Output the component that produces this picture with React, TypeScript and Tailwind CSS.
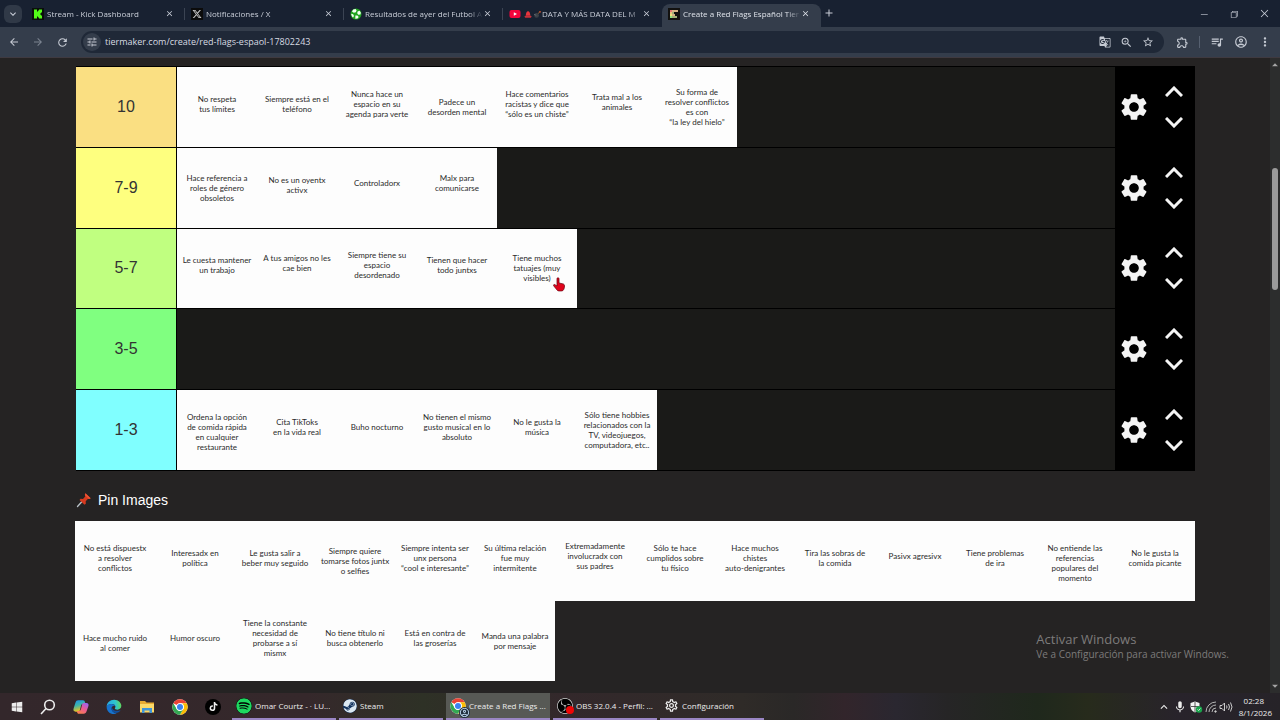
import React, { useState } from 'react';
import {
  MdAdd,
  MdArrowBack,
  MdArrowDropDown,
  MdArrowDropUp,
  MdArrowForward,
  MdClose,
  MdGTranslate,
  MdKeyboardArrowDown,
  MdKeyboardArrowUp,
  MdMic,
  MdMoreVert,
  MdOutlineAccountCircle,
  MdOutlineExtension,
  MdOutlineSettings,
  MdQueueMusic,
  MdRefresh,
  MdSettings,
  MdStarBorder,
  MdTune,
  MdZoomIn,
} from 'react-icons/md';
import { VscChromeClose, VscChromeMinimize, VscChromeRestore } from 'react-icons/vsc';
import { FaSpotify, FaSteam, FaTiktok, FaWindows, FaXTwitter } from 'react-icons/fa6';
import { SiObsstudio } from 'react-icons/si';

// Where the caption sits inside its 80px square
type Level = 'high' | 'upper' | 'middle' | 'low';

interface Card {
  text: string;
  level?: Level;
}

interface Tier {
  label: string;
  color: string;
  cards: Card[];
}

const LEVEL_CLASS: Record<Level, string> = {
  high: 'pb-[10px]',
  upper: 'pb-[6px]',
  middle: 'pb-0',
  low: 'pt-1',
};

const TIERS: Tier[] = [
  {
    label: '10',
    color: 'bg-[#fadf82]',
    cards: [
      { text: 'No respeta\ntus límites' },
      { text: 'Siempre está en el\nteléfono' },
      { text: 'Nunca hace un\nespacio en su\nagenda para verte' },
      { text: 'Padece un\ndesorden mental', level: 'middle' },
      { text: 'Hace comentarios\nracistas y dice que\n“sólo es un chiste”' },
      { text: 'Trata mal a los\nanimales', level: 'high' },
      { text: 'Su forma de\nresolver conflictos\nes con\n“la ley del hielo”', level: 'middle' },
    ],
  },
  {
    label: '7-9',
    color: 'bg-[#feff7f]',
    cards: [
      { text: 'Hace referencia a\nroles de género\nobsoletos', level: 'middle' },
      { text: 'No es un oyentx\nactivx' },
      { text: 'Controladorx', level: 'high' },
      { text: 'Malx para\ncomunicarse', level: 'high' },
    ],
  },
  {
    label: '5-7',
    color: 'bg-[#c0ff80]',
    cards: [
      { text: 'Le cuesta mantener\nun trabajo' },
      { text: 'A tus amigos no les\ncae bien', level: 'high' },
      { text: 'Siempre tiene su\nespacio\ndesordenado' },
      { text: 'Tienen que hacer\ntodo juntxs' },
      { text: 'Tiene muchos\ntatuajes (muy\nvisibles)', level: 'middle' },
    ],
  },
  { label: '3-5', color: 'bg-[#80ff80]', cards: [] },
  {
    label: '1-3',
    color: 'bg-[#80ffff]',
    cards: [
      { text: 'Ordena la opción\nde comida rápida\nen cualquier\nrestaurante', level: 'low' },
      { text: 'Cita TikToks\nen la vida real' },
      { text: 'Buho nocturno' },
      { text: 'No tienen el mismo\ngusto musical en lo\nabsoluto' },
      { text: 'No le gusta la\nmúsica' },
      { text: 'Sólo tiene hobbies\nrelacionados con la\nTV, videojuegos,\ncomputadora, etc..', level: 'middle' },
    ],
  },
];

const PINS: Card[] = [
  { text: 'No está dispuestx\na resolver\nconflictos' },
  { text: 'Interesadx en\npolítica' },
  { text: 'Le gusta salir a\nbeber muy seguido' },
  { text: 'Siempre quiere\ntomarse fotos juntx\no selfies', level: 'middle' },
  { text: 'Siempre intenta ser\nunx persona\n“cool e interesante”' },
  { text: 'Su última relación\nfue muy\nintermitente' },
  { text: 'Extremadamente\ninvolucradx con\nsus padres', level: 'high' },
  { text: 'Sólo te hace\ncumplidos sobre\ntu físico' },
  { text: 'Hace muchos\nchistes\nauto-denigrantes' },
  { text: 'Tira las sobras de\nla comida' },
  { text: 'Pasivx agresivx', level: 'high' },
  { text: 'Tiene problemas\nde ira' },
  { text: 'No entiende las\nreferencias\npopulares del\nmomento', level: 'low' },
  { text: 'No le gusta la\ncomida picante' },
  { text: 'Hace mucho ruido\nal comer', level: 'low' },
  { text: 'Humor oscuro' },
  { text: 'Tiene la constante\nnecesidad de\nprobarse a sí\nmismx' },
  { text: 'No tiene título ni\nbusca obtenerlo' },
  { text: 'Está en contra de\nlas groserías' },
  { text: 'Manda una palabra\npor mensaje', level: 'middle' },
];

/* ---------- logos ---------- */

function KickLogo() {
  return (
    <svg viewBox="0 0 12 12" className="size-3 shrink-0">
      <rect width="12" height="12" fill="#0a0f0a" />
      <path d="M2 1.5h3v2h1v-1h1v-1h3v3H9v1H8v1h1v1h1v3H7v-1H6v-1H5v2H2z" fill="#53fc18" />
    </svg>
  );
}

function XLogo() {
  return (
    <span className="flex size-3 shrink-0 items-center justify-center bg-[#0b0b0b] text-[#c9c9c9]">
      <FaXTwitter size={10} />
    </span>
  );
}

function FootballLogo() {
  return (
    <svg viewBox="0 0 12 12" className="size-3 shrink-0">
      <circle cx="6" cy="6" r="5.5" fill="#1ea51e" />
      <path d="M3.2 1.6 5.6 1l1 1.4-.8 1.8-2 .5L2 3.5zM7.6 3.6l2-.8 1.3 2-.5 1.6-2 .3-1.2-1.5zM1.2 5.8l2 .4.8 1.9-1 1.4C1.9 8.6 1.2 7.3 1.2 5.8zM5.4 7.6l2-.2 1.3 1.5-1.2 1.7-2.2.2z" fill="#f2fff2" />
    </svg>
  );
}

function YoutubeLogo() {
  return (
    <svg viewBox="0 0 12 12" className="size-3 shrink-0">
      <rect x="0.5" y="2" width="11" height="8" rx="2" fill="#f5053c" />
      <path d="M4.8 4.2v3.6L8 6z" fill="#fff" />
    </svg>
  );
}

function TierMakerLogo() {
  return (
    <svg viewBox="0 0 12 12" className="size-3 shrink-0">
      <rect width="12" height="12" fill="#12110f" />
      <path d="M2 2h2v2H2z" fill="#e87a74" />
      <path d="M2 4h2v2H2z" fill="#ecc27e" />
      <path d="M2 6h2v2H2z" fill="#efe57e" />
      <path d="M2 8h2v2H2z" fill="#8fe07e" />
      <path d="M4 2h6v2H4zM4 6h3v2H4z" fill="#d6b384" />
      <path d="M4 4h2v2H4zM4 8h5v2H4z" fill="#a3b377" />
    </svg>
  );
}

function SirenBomb() {
  return (
    <svg viewBox="0 0 20 10" className="inline-block h-[9px] w-[18px] align-[-2px]">
      <path d="M2 6.5C2 3.5 3 1.5 4.5 1.5S7 3.5 7 6.5z" fill="#e8353d" />
      <rect x="1" y="6.5" width="7" height="2" rx="0.5" fill="#c9303a" />
      <circle cx="14" cy="6" r="2.6" fill="#3c4148" />
      <path d="m15.5 4 2-1.8" stroke="#a7682f" strokeWidth="0.9" />
      <circle cx="17.8" cy="2" r="1" fill="#d8552c" />
      <path d="M11.5 4.5 13 6" stroke="#9fa5ad" strokeWidth="0.7" />
    </svg>
  );
}

function ChromeLogo() {
  return (
    <svg viewBox="0 0 48 48" className="size-4 shrink-0">
      <circle cx="24" cy="24" r="23" fill="#fff" />
      <path d="M24 1a23 23 0 0 1 19.9 11.5H24A11.5 11.5 0 0 0 14 18.2L4.1 12.5A23 23 0 0 1 24 1z" fill="#ea4335" />
      <path d="M43.9 12.5A23 23 0 0 1 24 47l10-17.3a11.5 11.5 0 0 0 0-11.5l-3-5.7z" fill="#fbbc05" />
      <path d="M24 47A23 23 0 0 1 4.1 12.5L14 29.7a11.5 11.5 0 0 0 15.7 4.3l4.3-4.3z" fill="#34a853" />
      <circle cx="24" cy="24" r="11.5" fill="#fff" />
      <circle cx="24" cy="24" r="9" fill="#3b82f0" />
    </svg>
  );
}

function ChromeProfileLogo() {
  return (
    <span className="relative flex shrink-0">
      <ChromeLogo />
      <span className="absolute -right-1 -bottom-1 flex rounded-full bg-[#202e3d] text-[#b9d3ea]">
        <MdOutlineAccountCircle size={11} />
      </span>
    </span>
  );
}

function CopilotLogo() {
  return (
    <svg viewBox="0 0 24 24" className="size-4 shrink-0">
      <defs>
        <linearGradient id="cp1" x1="0" y1="0" x2="0.3" y2="1">
          <stop offset="0" stopColor="#1c8fee" />
          <stop offset="0.5" stopColor="#3fb6a8" />
          <stop offset="1" stopColor="#f2c21b" />
        </linearGradient>
        <linearGradient id="cp2" x1="0.8" y1="0" x2="0.2" y2="1">
          <stop offset="0" stopColor="#9a63f0" />
          <stop offset="0.5" stopColor="#ec5b93" />
          <stop offset="1" stopColor="#f7824a" />
        </linearGradient>
      </defs>
      <path d="M8 2h7c2 0 2.5 1 3 3l.5 2h-3c-2 0-3 1-3.5 3l-1.5 6c-.5 2-1.5 3-3.5 3H4c-3 0-4-2-3-5L3.5 6C4.5 3 5.5 2 8 2z" fill="url(#cp1)" />
      <path d="M16 22H9c-2 0-2.5-1-3-3l-.3-1h2.8c2 0 3-1 3.5-3l1.5-6c.5-2 1.5-3 3.5-3h3c3 0 4 2 3 5l-2.5 7c-1 3-2 4-4.5 4z" fill="url(#cp2)" />
    </svg>
  );
}

function EdgeLogo() {
  return (
    <svg viewBox="0 0 24 24" className="size-4 shrink-0">
      <defs>
        <linearGradient id="ed1" x1="0" y1="0.5" x2="1" y2="0.4">
          <stop offset="0" stopColor="#25a7e6" />
          <stop offset="0.6" stopColor="#2fc4cf" />
          <stop offset="1" stopColor="#62d957" />
        </linearGradient>
      </defs>
      <path d="M1 12C1 5.5 6 1 12.2 1 19 1 23 5.8 23 10.3c0 3.7-2.8 5.7-5.8 5.7-2.5 0-3.9-.8-3.9-1.8 0-.7.9-1 .9-2.5C14.2 9.5 12 7.5 9 7.5c-4 0-7 2-8 4.5z" fill="url(#ed1)" />
      <path d="M1 12c.6-2.7 3.5-4.5 7-4.5 2.8 0 4.8 1.2 5.6 2.7-3.5-.8-5.9 2-5.2 5.3.8 3.7 4 6.2 8.1 5.6-1.4 1-3 1.5-4.7 1.5C5.6 22.6 1 18 1 12z" fill="#1673cf" />
      <path d="M9 12.2c-.8 1-.9 2.2-.6 3.5.8 3.6 4.4 5.7 8.2 5.1 2.2-.5 3.9-1.7 5-3.4.3-.4-.1-.8-.5-.6-5.2 2.2-11.5.6-12.1-4.6z" fill="#11509f" />
    </svg>
  );
}

function ExplorerLogo() {
  return (
    <svg viewBox="0 0 16 14" className="h-[14px] w-4 shrink-0">
      <path d="M1 1h5l1.5 1.5H15V12H1z" fill="#e7ab32" />
      <path d="M1 4h14v8.5H1z" fill="#fbd969" />
      <path d="M3 8h10v5h-2.5v-2.5h-5V13H3z" fill="#3f96d8" />
    </svg>
  );
}

function PushPin() {
  return (
    <svg viewBox="0 0 16 16" className="size-4">
      <path d="M1.5 14.5 6.5 9" stroke="#b9c2c8" strokeWidth="1.3" strokeLinecap="round" />
      <path d="m9.4 1.3 5.3 4.9-1.6.9-1.3-.2-2.1 2.3.1 2.6-1.3.9-5-4.7 1-1.2 2.5.2 2.2-2.4-.4-1.9z" fill="#d63a1f" />
      <path d="m9.4 1.3 5.3 4.9-1.6.9-4.1-3.9z" fill="#ee5434" />
    </svg>
  );
}

function HandCursor() {
  return (
    <svg viewBox="0 0 24 28" className="h-[15px] w-3">
      <path d="M8 2.5c0-1.300.9-2 2-2s2 .7 2 2V11l8 1.8c2 .5 3 1.7 3 3.7 0 4-.8 7.5-3.5 9.8-1 .9-9 .9-10 0C7 24.500 4.500 20.500 1.300 16.500c-1-1.500.7-3.200 2.500-2.200L8 17z" fill="#e0041c" stroke="#6c0612" strokeWidth="1.5" />
    </svg>
  );
}

function Chevron({ up = false }: { up?: boolean }) {
  return (
    <svg viewBox="0 0 18 11" className="h-[11px] w-[18px]" fill="none" stroke="currentColor" strokeWidth="3">
      <path d={up ? 'M1 10 9 2l8 8' : 'm1 1 8 8 8-8'} />
    </svg>
  );
}

/* ---------- browser chrome ---------- */

const TABS = [
  { title: 'Stream - Kick Dashboard', icon: <KickLogo /> },
  { title: 'Notificaciones / X', icon: <XLogo /> },
  { title: 'Resultados de ayer del Futbol A', icon: <FootballLogo /> },
  { title: 'DATA Y MÁS DATA DEL M', icon: <YoutubeLogo />, prefix: <SirenBomb /> },
  { title: 'Create a Red Flags Español Tier', icon: <TierMakerLogo /> },
];

function TabStrip() {
  const [active, setActive] = useState(4);

  return (
    <div className="flex h-[27px] items-end bg-[#182131] text-[#c9ced8]">
      <button aria-label="Buscar pestañas" className="mx-1 mb-1 flex size-[18px] shrink-0 items-center justify-center rounded-md bg-[#303947]">
        <MdKeyboardArrowDown size={12} />
      </button>
      {TABS.map((tab, i) => (
        <div
          key={tab.title}
          className={`flex h-[23px] min-w-0 flex-[0_1_159px] items-center rounded-t-lg pb-1 pl-[6px] ${
            i === active ? 'bg-[#343d4b] text-[#dfe3ea]' : ''
          }`}
        >
          <button onClick={() => setActive(i)} className="flex min-w-0 flex-1 items-center gap-[3px] text-left">
            {tab.icon}
            <span className="min-w-0 flex-1 overflow-hidden text-[8px] leading-4 whitespace-nowrap [mask-image:linear-gradient(to_right,black_88%,transparent)]">
              {tab.prefix}
              {tab.title}
            </span>
          </button>
          <button aria-label={`Cerrar ${tab.title}`} className="shrink-0">
            <MdClose size={9} />
          </button>
          <span className={`ml-[10px] h-3 w-px ${i < active - 1 ? 'bg-[#3b4453]' : ''}`} />
        </div>
      ))}
      <button aria-label="Nueva pestaña" className="mb-2 ml-[2px] shrink-0">
        <MdAdd size={12} />
      </button>
      <div className="mb-2 ml-auto flex shrink-0 gap-5 pr-[10px]">
        <button aria-label="Minimizar"><VscChromeMinimize size={10} /></button>
        <button aria-label="Restaurar"><VscChromeRestore size={10} /></button>
        <button aria-label="Cerrar"><VscChromeClose size={11} /></button>
      </div>
    </div>
  );
}

function Toolbar() {
  return (
    <div className="flex h-[31px] items-center border-b border-[#3f3a40] bg-[#343d4b] text-[#c5cad3]">
      <div className="flex w-[81px] shrink-0 items-center gap-3 pl-2">
        <button aria-label="Atrás"><MdArrowBack size={12} /></button>
        <button aria-label="Adelante" className="text-[#7b8390]"><MdArrowForward size={12} /></button>
        <button aria-label="Recargar"><MdRefresh size={13} /></button>
      </div>
      <div className="flex h-[22px] min-w-0 flex-1 items-center rounded-full bg-[#1f2837] pr-[10px] pl-[2px]">
        <button aria-label="Información del sitio" className="flex size-[18px] shrink-0 items-center justify-center rounded-full bg-[#343d4b]">
          <MdTune size={12} />
        </button>
        <input
          aria-label="Dirección"
          defaultValue="tiermaker.com/create/red-flags-espaol-17802243"
          className="ml-1 min-w-0 flex-1 bg-transparent text-[9px] text-[#d7dbe2] outline-none"
        />
        <div className="flex items-center gap-[9px]">
          <button aria-label="Traducir"><MdGTranslate size={12} /></button>
          <button aria-label="Zoom"><MdZoomIn size={13} /></button>
          <button aria-label="Favorito"><MdStarBorder size={12} /></button>
        </div>
      </div>
      <div className="flex shrink-0 items-center gap-[10px] pr-2 pl-3">
        <button aria-label="Extensiones"><MdOutlineExtension size={13} /></button>
        <span className="h-3 w-px bg-[#566070]" />
        <button aria-label="Multimedia"><MdQueueMusic size={14} /></button>
        <button aria-label="Perfil"><MdOutlineAccountCircle size={14} /></button>
        <button aria-label="Menú"><MdMoreVert size={14} /></button>
      </div>
    </div>
  );
}

/* ---------- tier list ---------- */

function CardTile({ card }: { card: Card }) {
  return (
    <div
      className={`flex min-h-[79px] w-20 shrink-0 items-center justify-center bg-[#fdfdfd] text-center font-['Lato',sans-serif] text-[8px] leading-[10px] whitespace-pre text-[#2b2b2b] ${
        LEVEL_CLASS[card.level ?? 'upper']
      }`}
    >
      {card.text}
    </div>
  );
}

function TierRow({ tier, showCursor }: { tier: Tier; showCursor: boolean }) {
  return (
    <div className="flex gap-px">
      <div className={`flex w-[100px] shrink-0 items-center justify-center text-base leading-5 text-[#333] ${tier.color}`}>{tier.label}</div>
      <div className="relative flex min-w-0 flex-1 flex-wrap bg-[#1a1a18]">
        {tier.cards.map(card => (
          <CardTile key={card.text} card={card} />
        ))}
        {showCursor && (
          <span className="absolute top-12 left-[376px]">
            <HandCursor />
          </span>
        )}
      </div>
      <div className="-ml-px flex w-20 shrink-0 items-center gap-[15px] pl-[3px] text-[#f4f4f4]">
        <button aria-label={`Opciones de ${tier.label}`}><MdSettings size={32} /></button>
        <div className="flex flex-col gap-5">
          <button aria-label={`Subir ${tier.label}`}><Chevron up /></button>
          <button aria-label={`Bajar ${tier.label}`}><Chevron /></button>
        </div>
      </div>
    </div>
  );
}

function Page() {
  return (
    <div className="flex min-h-0 flex-1 bg-[#252323]">
      <main className="relative min-w-0 flex-1 overflow-hidden px-[75px] pt-2">
        <div className="ml-px grid min-h-[405px] auto-rows-fr gap-px border-y border-black bg-black">
          {TIERS.map(tier => (
            <TierRow key={tier.label} tier={tier} showCursor={tier.label === '5-7'} />
          ))}
        </div>
        <h2 className="ml-px flex h-[50px] items-center gap-[6px] pt-2 text-sm text-white">
          <PushPin />
          Pin Images
        </h2>
        <div className="grid auto-rows-[80px] grid-cols-[repeat(auto-fill,80px)]">
          {PINS.map(card => (
            <CardTile key={card.text} card={card} />
          ))}
        </div>
        <div className="absolute right-[41px] bottom-8 font-['Open_Sans',sans-serif] text-[#7d7b7b]">
          <p className="text-[13px] leading-4">Activar Windows</p>
          <p className="text-[10px] leading-[14px]">Ve a Configuración para activar Windows.</p>
        </div>
      </main>
      <div className="flex w-[10px] shrink-0 flex-col items-center bg-[#2c2d2d] text-[#a5a5a5]">
        <MdArrowDropUp size={14} className="shrink-0" />
        <div className="mt-24 h-[122px] w-[6px] rounded-full bg-[#9b9b9b]" />
        <MdArrowDropDown size={14} className="mt-auto shrink-0" />
      </div>
    </div>
  );
}

/* ---------- taskbar ---------- */

const WINDOWS = [
  { title: 'Omar Courtz - · LU...', icon: <FaSpotify size={16} className="shrink-0 rounded-full bg-black text-[#1ed760]" /> },
  { title: 'Steam', icon: <FaSteam size={14} className="shrink-0 rounded-full bg-[#12335f] text-[#dbe8f2]" /> },
  { title: 'Create a Red Flags ...', icon: <ChromeProfileLogo />, active: true },
  {
    title: 'OBS 32.0.4 - Perfil: ...',
    icon: (
      <span className="relative flex shrink-0 rounded-full bg-black text-[#d9d9d9]">
        <SiObsstudio size={16} />
        <span className="absolute -right-px bottom-0 size-2 rounded-full bg-[#f00606]" />
      </span>
    ),
  },
  { title: 'Configuración', icon: <MdOutlineSettings size={15} className="shrink-0" /> },
];

function Taskbar() {
  return (
    <footer className="flex h-[27px] items-stretch bg-[linear-gradient(to_right,#33272b_0%,#35282b_24%,#2e3126_33%,#33282b_44%,#2f2b28_58%,#2a2827_62%,#32252b_66%,#2a2730_70%,#262526_74%,#1f281c_81%,#272b1c_85%,#28232b_92%,#262328_100%)] text-[#ececec]">
      <div className="flex w-[232px] shrink-0 items-center gap-[17px] pl-[11px]">
        <button aria-label="Inicio"><FaWindows size={12} /></button>
        <button aria-label="Buscar">
          <svg viewBox="0 0 16 16" className="size-4" fill="none" stroke="currentColor" strokeWidth="1.6">
            <circle cx="9.5" cy="6" r="4.8" />
            <path d="M6 9.5 1 15" />
          </svg>
        </button>
        <button aria-label="Copilot"><CopilotLogo /></button>
        <button aria-label="Edge"><EdgeLogo /></button>
        <button aria-label="Explorador"><ExplorerLogo /></button>
        <button aria-label="Chrome"><ChromeLogo /></button>
        <button aria-label="TikTok" className="flex size-4 items-center justify-center rounded-full bg-black">
          <FaTiktok size={9} />
        </button>
      </div>
      <div className="flex min-w-0 flex-1 gap-[3px]">
        {WINDOWS.map(win => (
          <button
            key={win.title}
            className={`flex min-w-0 flex-[0_1_104px] items-center gap-[3px] border-b-2 border-[#9a86c4] pl-1 text-[8px] whitespace-nowrap ${
              win.active ? 'bg-[#575955]' : ''
            }`}
          >
            {win.icon}
            <span className="truncate">{win.title}</span>
          </button>
        ))}
      </div>
      <div className="flex shrink-0 items-center gap-[2px] pr-2">
        <button aria-label="Iconos ocultos"><MdKeyboardArrowUp size={14} /></button>
        <MdMic size={14} />
        <svg viewBox="0 0 14 14" className="size-[14px]">
          <path d="M6 1.5 1.5 3v3.5C1.5 9.5 3.5 11.5 6 12.5 8.5 11.5 10.5 9.5 10.5 6.5V3z" fill="#f4f4f4" />
          <path d="M6 2v10M2 6.5h8.5" stroke="#333" strokeWidth="0.8" />
          <circle cx="10" cy="9.5" r="3.2" fill="#17a34a" />
          <path d="m8.6 9.5 1 1 1.8-2" stroke="#fff" strokeWidth="0.8" fill="none" />
        </svg>
        <svg viewBox="0 0 12 12" className="size-3" fill="none" stroke="#b5b5b5" strokeWidth="1">
          <path d="M1 11A10 10 0 0 1 11 1M4 11a7 7 0 0 1 7-7M7 11a4 4 0 0 1 4-4" />
          <circle cx="10.5" cy="10.5" r="0.8" fill="#eee" />
        </svg>
        <svg viewBox="0 0 14 12" className="h-3 w-[14px]" fill="none" stroke="#dcdcdc" strokeWidth="0.9">
          <path d="M1 4.5h2l2.5-2.5v8L3 7.5H1zM7.5 4.5q1 1.5 0 3M9.5 3q2 3 0 6M11.5 1.5q3 4.5 0 9" />
        </svg>
        <div className="ml-1 text-right text-[8px] leading-3">
          <p className="pr-2">02:28</p>
          <p>8/1/2026</p>
        </div>
      </div>
    </footer>
  );
}

export default function App() {
  return (
    <div className="flex h-screen flex-col overflow-hidden font-['Liberation_Sans',Arial,sans-serif]">
      <header className="shrink-0 font-['Open_Sans',sans-serif]">
        <TabStrip />
        <Toolbar />
      </header>
      <Page />
      <div className="shrink-0 font-['Open_Sans',sans-serif]">
        <Taskbar />
      </div>
    </div>
  );
}
